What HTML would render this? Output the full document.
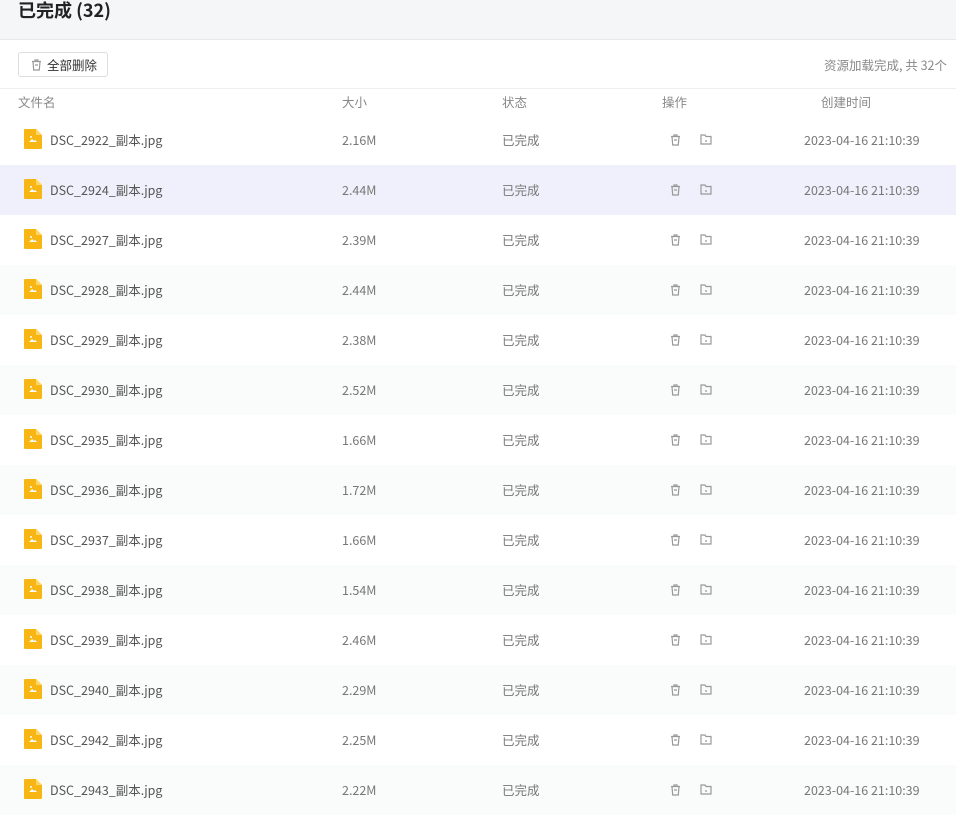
<!DOCTYPE html>
<html><head><meta charset="utf-8"><style>
body{margin:0;width:956px;height:810px;overflow:hidden;background:#fff;font-family:"Noto Sans CJK SC","Liberation Sans",sans-serif;color:#666;font-size:12.5px}
.top{height:39px;background:#f5f6f8;border-bottom:1px solid #e8e8e8;position:relative}
.top h1{margin:0;position:absolute;left:18px;top:-1px;font-size:18px;font-weight:bold;color:#222;line-height:22px}
.bar{height:48px;border-bottom:1px solid #eee;position:relative}
.btn{position:absolute;left:18px;top:12px;width:90px;height:25px;border:1px solid #ddd;border-radius:3px;font-size:12.5px;color:#333;line-height:23px;box-sizing:border-box;padding-left:28px}
.btn svg{position:absolute;left:12px;top:6px}
.info{position:absolute;right:9px;top:16px;color:#888;line-height:18px}
.hd{height:26px;position:relative;color:#888}
.c{position:absolute;white-space:nowrap}
.hd .c{top:0;line-height:26px}
.row{height:50px;position:relative}
.row:nth-child(even){background:#fafbfb}
.row.sel{background:#f0f0fc}
.row span.c{top:0;line-height:50px;color:#777}
.row .name{left:50px;color:#555!important}
.ic{position:absolute;left:24px;top:14px}
</style></head><body>
<div class="top"><h1>已完成 (32)</h1></div>
<div class="bar"><div class="btn"><svg width="11" height="12" viewBox="0 0 11 12" fill="none" stroke="#999" stroke-width="1.2"><path d="M1 2.5h9M4 2.5V1h3v1.5M2 2.5l.7 8.5h5.6L9 2.5M4 6h3"/></svg>全部删除</div><div class="info">资源加载完成, 共 32个</div></div>
<div class="hd"><span class="c" style="left:18px">文件名</span><span class="c" style="left:342px">大小</span><span class="c" style="left:502px">状态</span><span class="c" style="left:662px">操作</span><span class="c" style="left:821px">创建时间</span></div>
<div id="rows"></div>
<script>
var d=[["2922","2.16M"],["2924","2.44M"],["2927","2.39M"],["2928","2.44M"],["2929","2.38M"],["2930","2.52M"],["2935","1.66M"],["2936","1.72M"],["2937","1.66M"],["2938","1.54M"],["2939","2.46M"],["2940","2.29M"],["2942","2.25M"],["2943","2.22M"]];
var h="";d.forEach(function(r,i){h+='<div class="row'+(i==1?' sel':'')+'"><svg class="ic" width="18" height="20" viewBox="0 0 18 20"><path d="M1 0h11l6 6v13a1 1 0 0 1-1 1H1a1 1 0 0 1-1-1V1a1 1 0 0 1 1-1z" fill="#f8b614"/><path d="M12 0v6h6z" fill="#fcd66a"/><path d="M5 13l3-3 2 2 1-1 2 2z" fill="#fff"/><circle cx="7" cy="8" r="1" fill="#fff"/></svg><span class="c name">DSC_'+r[0]+'_副本.jpg</span><span class="c" style="left:342px">'+r[1]+'</span><span class="c" style="left:502px">已完成</span><svg class="c" style="left:670px;top:19px" width="11" height="12" viewBox="0 0 11 12" fill="none" stroke="#999" stroke-width="1.2"><path d="M1 2.5h9M4 2.5V1h3v1.5M2 2.5l.7 8.5h5.6L9 2.5M4 6h3"/></svg><svg class="c" style="left:700px;top:19px" width="12" height="11" viewBox="0 0 12 11" fill="none" stroke="#999" stroke-width="1.2"><path d="M1 2V1h4l1 1.5h5V10H1z M5 7h2"/></svg><span class="c" style="left:804px">2023-04-16 21:10:39</span></div>'});
document.getElementById("rows").innerHTML=h;
</script>
</body></html>
